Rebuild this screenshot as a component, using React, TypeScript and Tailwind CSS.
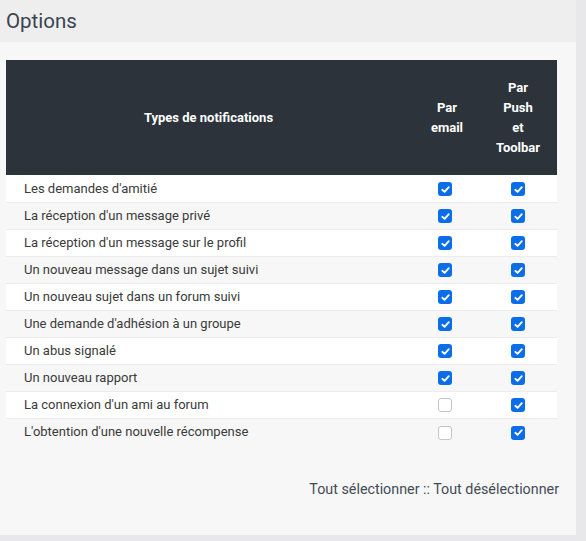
const rows: { label: string; email: boolean; push: boolean }[] = [
  { label: "Les demandes d'amitié", email: true, push: true },
  { label: "La réception d'un message privé", email: true, push: true },
  { label: "La réception d'un message sur le profil", email: true, push: true },
  { label: 'Un nouveau message dans un sujet suivi', email: true, push: true },
  { label: 'Un nouveau sujet dans un forum suivi', email: true, push: true },
  { label: "Une demande d'adhésion à un groupe", email: true, push: true },
  { label: 'Un abus signalé', email: true, push: true },
  { label: 'Un nouveau rapport', email: true, push: true },
  { label: "La connexion d'un ami au forum", email: false, push: true },
  { label: "L'obtention d'une nouvelle récompense", email: false, push: true },
];

function Box({ checked }: { checked: boolean }) {
  if (!checked) {
    return <span className="inline-block h-[14px] w-[14px] rounded-[3px] border border-[#c4c4c4] bg-white align-middle" />;
  }
  return (
    <span className="inline-flex h-[14px] w-[14px] items-center justify-center rounded-[3px] bg-[#0b6ee8] align-middle">
      <svg viewBox="0 0 12 12" className="h-[11px] w-[11px]" fill="none" stroke="white" strokeWidth="2" strokeLinecap="round" strokeLinejoin="round">
        <path d="M2.5 6.3 L5 8.6 L9.6 3.4" />
      </svg>
    </span>
  );
}

export default function App() {
  return (
    <div className="flex h-[541px] w-full bg-[#e8e8ea] font-['Roboto',sans-serif]">
      <div className="flex h-[535px] w-[576px] flex-col">
        <div className="flex h-[42px] items-center bg-[#eeeeee] px-[6px] text-[20.5px] text-[#3a4450]">Options</div>
        <div className="flex-1 bg-[#f7f7f7] px-[6px] pt-[18px]">
          <table className="w-[551px] table-fixed border-collapse text-[13px] text-[#3a3a3a]">
            <colgroup>
              <col />
              <col className="w-[72px]" />
              <col className="w-[74px]" />
            </colgroup>
            <thead>
              <tr className="h-[115px] bg-[#2c333b] text-[13px] font-bold leading-[20px] text-white">
                <th className="px-2">Types de notifications</th>
                <th className="px-[12px]">Par email</th>
                <th className="pr-[4px]">
                  Par<br />Push<br />et<br />Toolbar
                </th>
              </tr>
            </thead>
            <tbody>
              {rows.map((r, i) => (
                <tr
                  key={r.label}
                  className={`h-[27px] ${i < rows.length - 1 ? 'border-b border-[#ececec]' : ''} ${i % 2 === 0 ? 'bg-white' : 'bg-[#f7f7f7]'}`}
                >
                  <td className="pl-[18px]">{r.label}</td>
                  <td className="pr-[4px] text-center">
                    <Box checked={r.email} />
                  </td>
                  <td className="pr-[4px] text-center">
                    <Box checked={r.push} />
                  </td>
                </tr>
              ))}
            </tbody>
          </table>
          <div className="mt-[34px] w-[553px] text-right text-[14.3px] text-[#444b54]">Tout sélectionner :: Tout désélectionner</div>
        </div>
      </div>
    </div>
  );
}
